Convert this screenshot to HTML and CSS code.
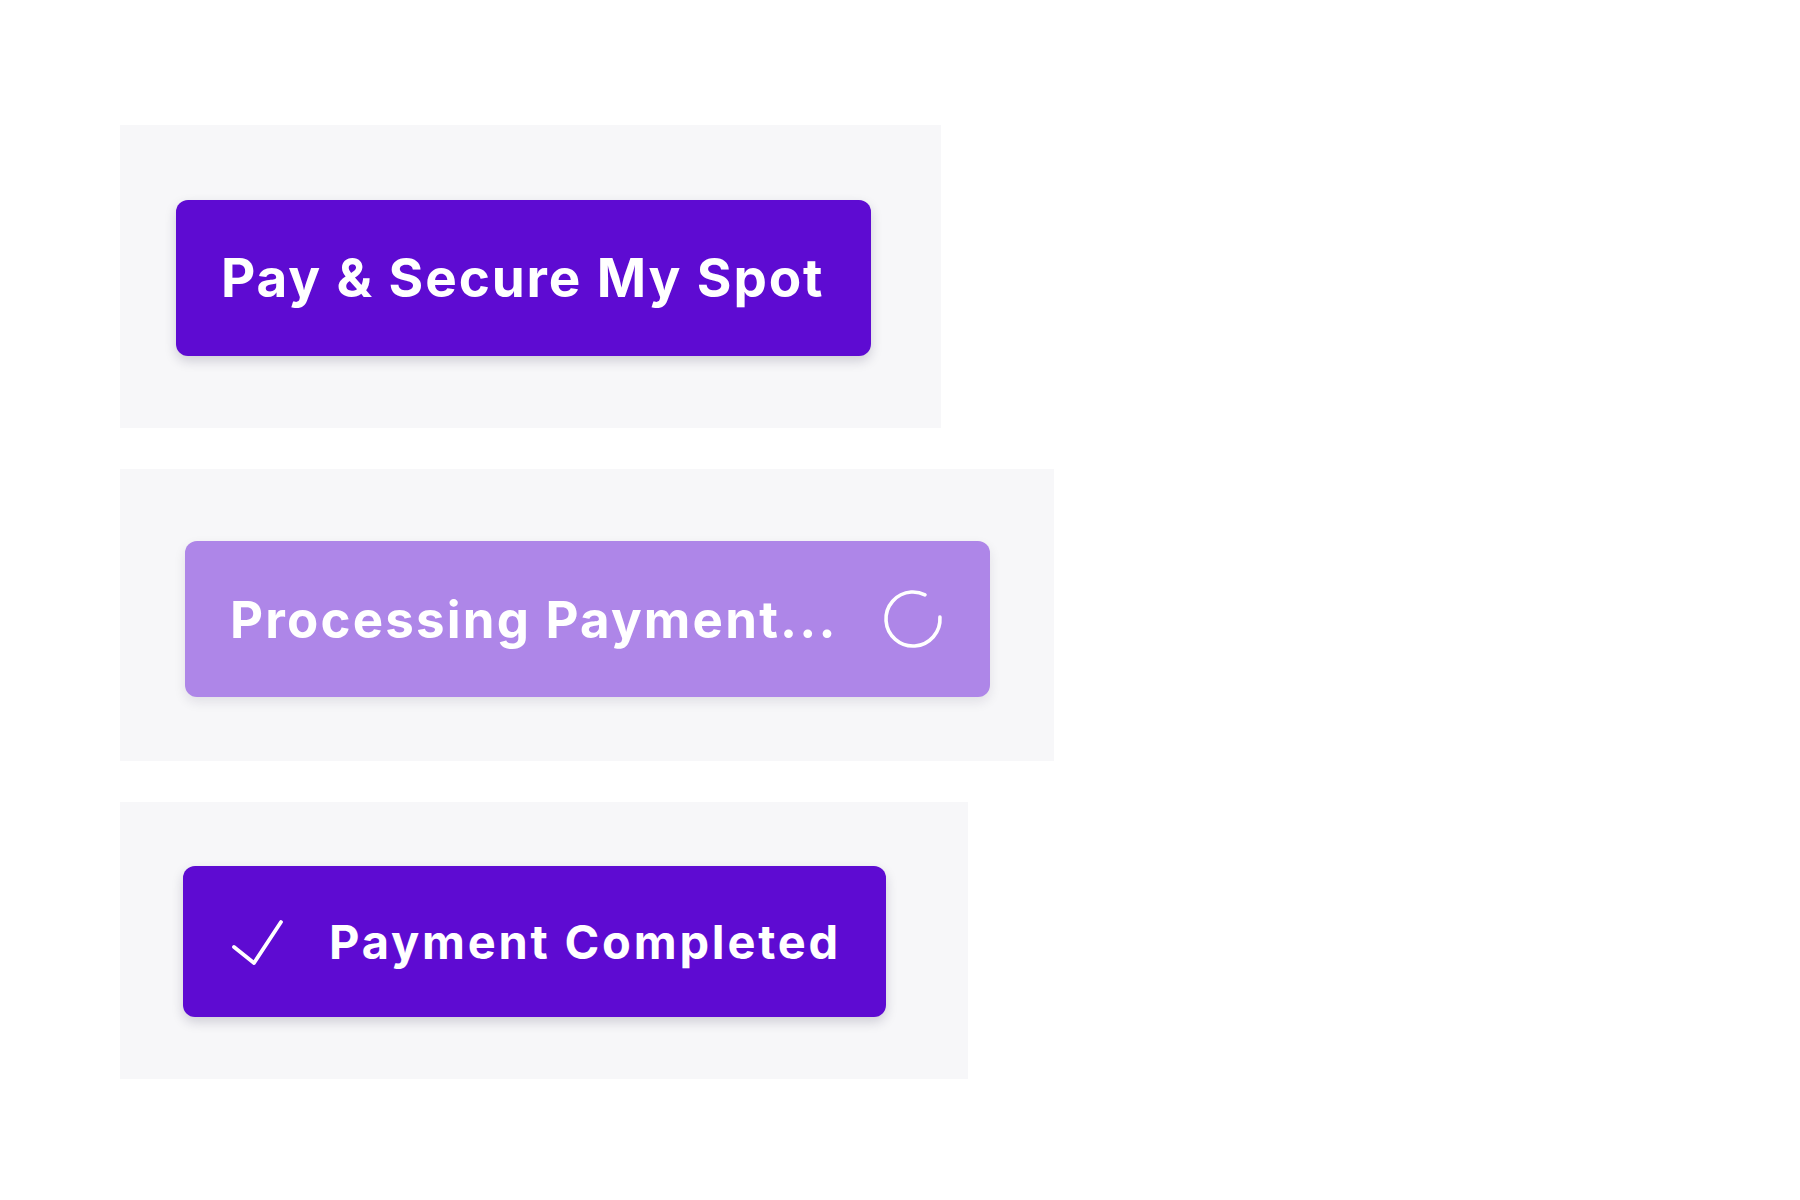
FILE: index.html
```html
<!DOCTYPE html>
<html lang="en">
<head>
<meta charset="utf-8">
<title>Payment buttons</title>
<link rel="stylesheet" href="styles.css">
</head>
<body>
<main class="stack">
  <section class="panel panel-pay">
    <button class="btn btn-pay" type="button"><span class="label">Pay &amp; Secure My Spot</span></button>
  </section>
  <section class="panel panel-processing">
    <button class="btn btn-processing" type="button" disabled>
      <span class="label">Processing Payment...</span>
      <svg class="spinner" viewBox="0 0 60 60" aria-hidden="true">
        <circle cx="30" cy="30" r="27" fill="none" stroke="#fff" stroke-width="3.6" stroke-linecap="round" stroke-dasharray="141 29" transform="rotate(-4 30 30)"/>
      </svg>
    </button>
  </section>
  <section class="panel panel-done">
    <button class="btn btn-done" type="button">
      <svg class="check" viewBox="0 0 52 48" aria-hidden="true">
        <polyline points="3,29 23,45 50,4" fill="none" stroke="#fff" stroke-width="3.8" stroke-linecap="round" stroke-linejoin="round"/>
      </svg>
      <span class="label">Payment Completed</span>
    </button>
  </section>
</main>
</body>
</html>
```

FILE: styles.css
```css
html, body {
  margin: 0;
  padding: 0;
  background: #ffffff;
}

body {
  font-family: Inter, "Liberation Sans", sans-serif;
}

.stack {
  display: flex;
  flex-direction: column;
  align-items: flex-start;
  gap: 41px;
  padding: 125px 0 0 120px;
}

.panel {
  background: #f7f7f9;
  display: flex;
}

.panel-pay { padding: 75px 70px 72px 56px; }
.panel-processing { padding: 72px 64px 64px 65px; }
.panel-done { padding: 64px 82px 62px 63px; }

.btn {
  display: flex;
  align-items: center;
  border: none;
  border-radius: 12px;
  background: #5e0bd2;
  color: #ffffff;
  font-family: Inter, "Liberation Sans", sans-serif;
  font-weight: 700;
  line-height: 1;
  white-space: nowrap;
  box-shadow: 0 5px 12px rgba(30, 20, 60, 0.18);
  cursor: pointer;
  box-sizing: border-box;
}

.btn-pay {
  height: 156px;
  width: 695px;
  padding: 0 45px;
  font-size: 53px;
  letter-spacing: 1.9px;
  justify-content: flex-start;
}

.btn-processing {
  height: 156px;
  width: 805px;
  padding: 0 47px 0 45px;
  font-size: 51px;
  letter-spacing: 2.2px;
  background: #ae86e8;
  box-shadow: 0 5px 12px rgba(30, 20, 60, 0.10);
  justify-content: space-between;
  cursor: default;
}

.btn-done {
  height: 151px;
  width: 703px;
  padding: 0 44px 0 48px;
  font-size: 47px;
  letter-spacing: 2.8px;
  gap: 46px;
}

.spinner {
  width: 60px;
  height: 60px;
  flex: none;
}

.check {
  width: 52px;
  height: 48px;
  flex: none;
}
```
